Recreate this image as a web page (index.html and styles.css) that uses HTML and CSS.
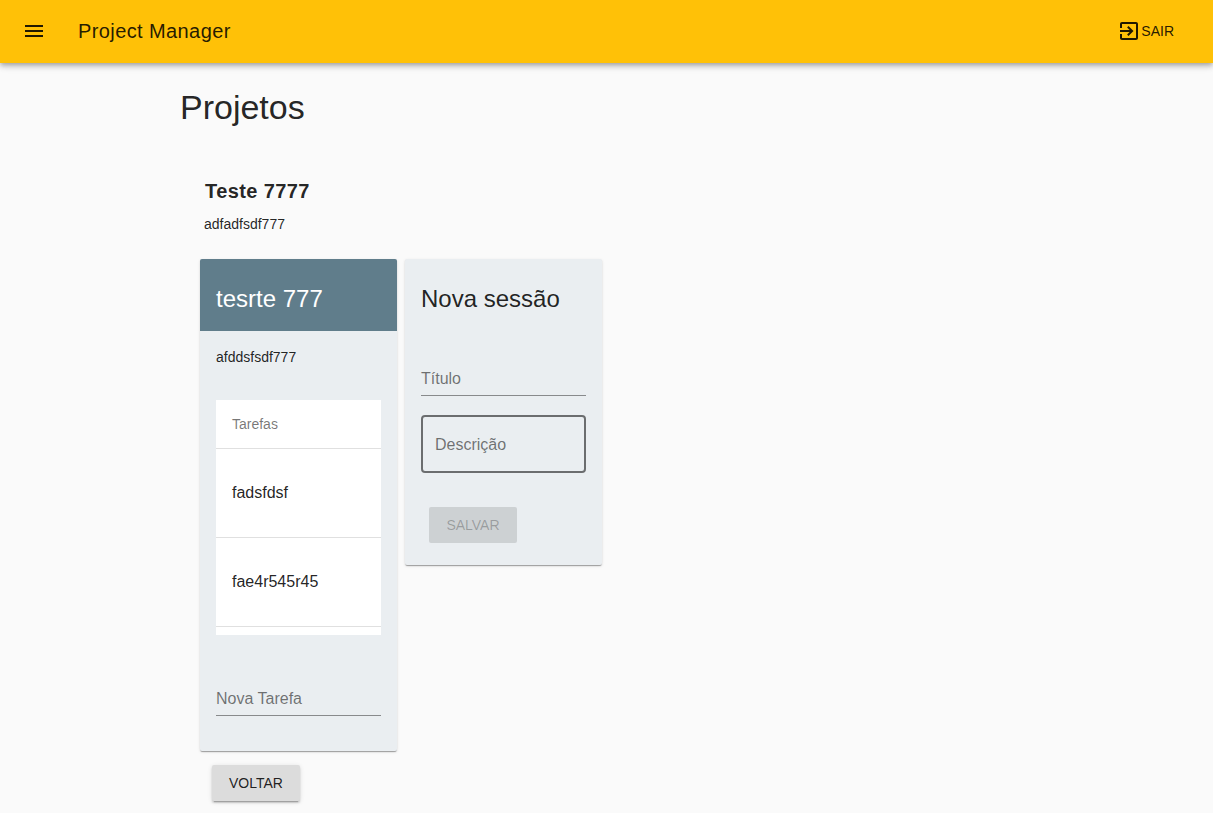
FILE: index.html
```html
<!DOCTYPE html>
<html lang="pt-BR">
<head>
<meta charset="utf-8">
<title>Project Manager</title>
<link rel="stylesheet" href="styles.css">
</head>
<body>
<header class="toolbar">
  <svg class="icon" viewBox="0 0 24 24"><path d="M3 18h18v-2H3v2zm0-5h18v-2H3v2zm0-7v2h18V6H3z"/></svg>
  <div class="toolbar-title">Project Manager</div>
  <div class="logout">
    <svg class="icon" viewBox="0 0 24 24"><path d="M10.09 15.59L11.5 17l5-5-5-5-1.41 1.41L12.67 11H3v2h9.67l-2.58 2.59zM19 3H5c-1.11 0-2 .9-2 2v4h2V5h14v14H5v-4H3v4c0 1.1.89 2 2 2h14c1.1 0 2-.9 2-2V5c0-1.1-.9-2-2-2z"/></svg>
    <span class="logout-label">SAIR</span>
  </div>
</header>
<main class="content">
  <h1 class="page-title">Projetos</h1>
  <section class="project">
    <h2 class="project-name">Teste 7777</h2>
    <p class="project-text">adfadfsdf777</p>
    <div class="sessions">
      <article class="card card-session">
        <div class="card-head">tesrte 777</div>
        <p class="card-text">afddsfsdf777</p>
        <div class="tasks">
          <div class="tasks-head">Tarefas</div>
          <div class="task">fadsfdsf</div>
          <div class="task">fae4r545r45</div>
        </div>
        <div class="field field-task">Nova Tarefa</div>
      </article>
      <article class="card card-new">
        <div class="card-head card-head-plain">Nova sessão</div>
        <div class="field field-title">Título</div>
        <div class="outline-field">Descrição</div>
        <button class="button button-disabled" disabled>SALVAR</button>
      </article>
    </div>
    <button class="button button-back">VOLTAR</button>
  </section>
</main>
</body>
</html>
```
FILE: styles.css
```css
* { box-sizing: border-box; margin: 0; padding: 0; }
html { overflow: hidden; }
body {
  height: 813px;
  overflow: hidden;
  background: #fafafa;
  color: rgba(0, 0, 0, .87);
  font: 14px/21px "Liberation Sans", Arial, sans-serif;
}
.toolbar {
  height: 63px;
  padding: 0 39px 1px 22px;
  display: flex;
  align-items: center;
  background: #ffc107;
  box-shadow: 0 2px 4px -1px rgba(0,0,0,.2), 0 4px 5px 0 rgba(0,0,0,.14), 0 1px 10px 0 rgba(0,0,0,.12);
}
.icon { width: 24px; height: 24px; fill: rgba(0, 0, 0, .87); }
.toolbar-title { margin-left: 32px; font-size: 20px; letter-spacing: .4px; }
.logout { margin-left: auto; display: flex; align-items: center; }
.logout-label { width: 33px; text-align: right; }
.content { padding: 24px 0 0 180px; }
.page-title { font-size: 34px; font-weight: 400; line-height: 40px; }
.project { padding: 54px 0 0 20px; }
.project-name {
  padding-left: 5px;
  font-size: 20px;
  line-height: 20px;
  letter-spacing: .4px;
}
.project-text { padding: 13px 0 0 4px; }
.sessions { margin-top: 24px; display: flex; align-items: flex-start; gap: 7.6px; }
.card {
  width: 197.4px;
  border-radius: 2px;
  background: #eaeef1;
  box-shadow: 0 2px 1px -1px rgba(0,0,0,.2), 0 1px 1px 0 rgba(0,0,0,.14), 0 1px 3px 0 rgba(0,0,0,.12);
}
.card-session { height: 492px; }
.card-new { height: 306px; }
.card-head {
  height: 72px;
  padding: 24px 16px 16px;
  border-radius: 2px 2px 0 0;
  background: #607d8b;
  color: #fff;
  font-size: 24px;
  line-height: 32px;
}
.card-head-plain { background: none; color: inherit; }
.card-text { padding: 16px 16px 0; }
.tasks { height: 235px; margin: 32px 16px 0; background: #fff; }
.tasks-head {
  height: 49px;
  padding: 0 16px;
  border-bottom: 1px solid rgba(0, 0, 0, .12);
  color: rgba(0, 0, 0, .54);
  line-height: 48px;
}
.task {
  height: 89px;
  padding: 0 16px;
  border-bottom: 1px solid rgba(0, 0, 0, .12);
  font-size: 16px;
  line-height: 88px;
}
.field {
  height: 28px;
  margin: 0 16px;
  border-bottom: 1px solid rgba(0, 0, 0, .42);
  color: rgba(0, 0, 0, .54);
  font-size: 16px;
  line-height: 22px;
}
.field-task { margin-top: 53px; }
.field-title { margin-top: 37px; }
.outline-field {
  height: 58px;
  margin: 19px 16px 0;
  padding: 0 12px;
  border: 2px solid rgba(0, 0, 0, .54);
  border-radius: 4px;
  color: rgba(0, 0, 0, .54);
  font-size: 16px;
  line-height: 56px;
}
.button {
  display: block;
  width: 88px;
  height: 36px;
  border: 0;
  border-radius: 2px;
  font: 14px/36px "Liberation Sans", Arial, sans-serif;
}
.button-disabled { margin: 34px 0 0 24px; background: rgba(0, 0, 0, .12); color: rgba(0, 0, 0, .26); }
.button-back {
  margin: 14px 0 0 12px;
  background: #dcdcdc;
  color: rgba(0, 0, 0, .87);
  box-shadow: 0 3px 1px -2px rgba(0,0,0,.2), 0 2px 2px 0 rgba(0,0,0,.14), 0 1px 5px 0 rgba(0,0,0,.12);
}
```
